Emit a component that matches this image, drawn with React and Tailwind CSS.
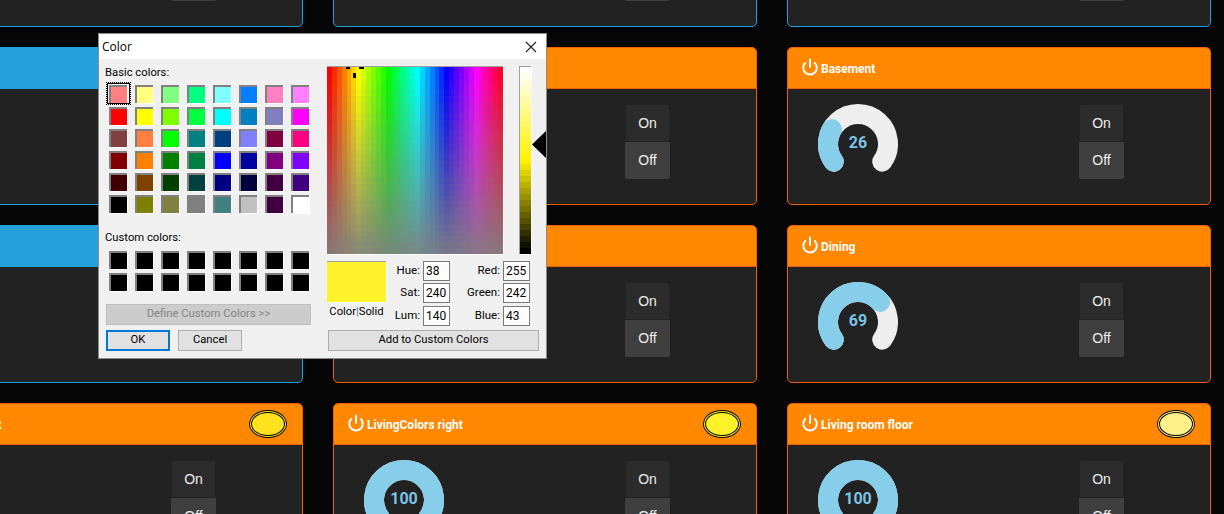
import React from "react";
import { Power } from "lucide-react";

const BASIC = [
  "#ff8080","#ffff80","#80ff80","#00ff80","#80ffff","#0080ff","#ff80c0","#ff80ff",
  "#ff0000","#ffff00","#80ff00","#00ff40","#00ffff","#0080c0","#8080c0","#ff00ff",
  "#804040","#ff8040","#00ff00","#008080","#004080","#8080ff","#800040","#ff0080",
  "#800000","#ff8000","#008000","#008040","#0000ff","#0000a0","#800080","#8000ff",
  "#400000","#804000","#004000","#004040","#000080","#000040","#400040","#400080",
  "#000000","#808000","#808040","#808080","#408080","#c0c0c0","#400040","#ffffff",
];

function polar(a) {
  const r = (a * Math.PI) / 180;
  return [40 + 30 * Math.cos(r), 40 + 30 * Math.sin(r)];
}
function arc(from, sweep) {
  const [x1, y1] = polar(from);
  const [x2, y2] = polar(from + sweep);
  return `M${x1} ${y1}A30 30 0 ${sweep > 180 ? 1 : 0} 1 ${x2} ${y2}`;
}

function Gauge({ value }) {
  return (
    <div className="relative w-20 h-[70px] shrink-0">
      <svg width="80" height="80" viewBox="0 0 80 80" className="block">
        <path d={arc(144, 252)} fill="none" stroke="#eeeeee" strokeWidth="20" strokeLinecap="round" />
        <path d={arc(144, (252 * value) / 100)} fill="none" stroke="#87ceeb" strokeWidth="20" strokeLinecap="round" />
      </svg>
      <div className="absolute left-0 top-[28px] w-20 text-center text-[16px] leading-[22px] font-bold text-[#7cc4e6] font-['Roboto',sans-serif]">
        {value}
      </div>
    </div>
  );
}

function Card({ blue, name, value, led }) {
  const border = blue ? "border-[#1f9fe0]" : "border-[#f55d05]";
  const head = blue ? "bg-[#26a0da]" : "bg-[#ff8800]";
  return (
    <div className={`h-[158px] rounded-[5px] border ${border} bg-[#222222] overflow-hidden flex flex-col`}>
      <div className={`h-[41px] shrink-0 border-b ${border} ${head} flex items-center pl-[13px] pr-[15px] text-white`}>
        {name && <Power size={18} strokeWidth={2.7} className="shrink-0 -mt-[3px]" />}
        <span className="ml-[2px] mt-[2px] text-[12px] font-bold font-['Roboto',sans-serif]">{name}</span>
        {led && (
          <div
            className="ml-auto w-[38px] h-[28px] rounded-[50%] border-[3px] border-double border-black"
            style={{ backgroundColor: led }}
          />
        )}
      </div>
      <div className="flex pl-[30px] pt-[15px]">
        <Gauge value={value} />
        <div className="ml-[181px] mt-[1px] w-[45px] flex flex-col items-center font-['Liberation_Sans',sans-serif] text-[14px] text-[#eeeeee]">
          <div className="w-[43px] h-[36px] bg-[#2c2c2c] rounded-t-[2px] flex items-center justify-center">On</div>
          <div className="w-[45px] h-[37px] mt-[1px] bg-[#3f3f3f] rounded-b-[2px] flex items-center justify-center">Off</div>
        </div>
      </div>
    </div>
  );
}

function Swatch({ color, selected }) {
  return (
    <div className="relative w-[18px] h-[18px]">
      <div
        className="w-full h-full border-2 border-[#808080] border-r-0 border-b-0 shadow-[1px_1px_0_#ffffff]"
        style={{ backgroundColor: color }}
      />
      {selected && (
        <div className="absolute -left-[3px] -top-[3px] w-[25px] h-[23px] border border-dotted border-black">
          <div className="w-full h-full border border-black" />
        </div>
      )}
    </div>
  );
}

function Spectrum() {
  const cols = 36;
  const rows = 32;
  const cells = [];
  for (let y = 0; y < rows; y++) {
    for (let x = 0; x < cols; x++) {
      const hue = (x / cols) * 360;
      const sat = 100 - (y / (rows - 1)) * 92;
      cells.push(
        <rect key={`${x}-${y}`} x={x * 5} y={y * 6} width="5.2" height="6.2" fill={`hsl(${hue} ${sat}% 50%)`} />
      );
    }
  }
  return (
    <div className="w-[176px] h-[188px] border-t border-[#a0a0a0] shadow-[1px_1px_0_#ffffff]">
      <svg width="176" height="187" viewBox="0 0 180 192" preserveAspectRatio="none" shapeRendering="crispEdges" className="block">
        {cells}
        <rect x="19" y="0" width="5" height="2" fill="#000" />
        <rect x="33" y="0" width="5" height="2" fill="#000" />
        <rect x="27" y="6" width="3" height="5" fill="#000" />
      </svg>
    </div>
  );
}

function LumBar() {
  const rows = 31;
  const cells = [];
  for (let y = 0; y < rows; y++) {
    const l = 100 - (y / (rows - 1)) * 100;
    cells.push(<rect key={y} x="0" y={y * 6} width="12" height="6.2" fill={`hsl(57 100% ${l}%)`} />);
  }
  return (
    <div className="w-[12px] h-[188px] border-t border-l border-[#a0a0a0] shadow-[1px_1px_0_#ffffff]">
      <svg width="11" height="187" viewBox="0 0 12 186" preserveAspectRatio="none" shapeRendering="crispEdges" className="block">
        {cells}
      </svg>
    </div>
  );
}

function Field({ label, value, labelW }) {
  return (
    <div className="flex items-center h-[20px]">
      <span className="text-right text-[11.5px]" style={{ width: labelW }}>{label}</span>
      <div className="ml-[3px] w-[27px] h-[20px] border border-[#7a7a7a] bg-white pl-[2px] leading-[18px] text-[12px]">{value}</div>
    </div>
  );
}

const Btn = "flex items-center justify-center h-[21px] bg-[#e1e1e1] text-black";

function Dialog() {
  return (
    <div className="absolute left-[98px] top-[33px] w-[449px] h-[326px] bg-[#f0f0f0] border border-[#8a8a8a] font-['Roboto',sans-serif] text-[11.25px] text-black">
      <div className="h-[25px] bg-white flex items-center pl-[3px] justify-between pr-[9px]">
        <span className="text-[12px] font-['Open_Sans',sans-serif]">Color</span>
        <svg width="12" height="12" viewBox="0 0 12 12"><path d="M1 1l10 10M11 1L1 11" stroke="#222" strokeWidth="1.1" fill="none" /></svg>
      </div>
      <div className="flex">
        <div className="w-[228px] pl-[6px] pt-[7px]">
          <div className="h-[14px] leading-[14px]">Basic colors:</div>
          <div className="ml-[4px] mt-[5px] grid grid-cols-[repeat(8,18px)] gap-x-[8px] gap-y-[4px]">
            {BASIC.map((c, i) => <Swatch key={i} color={c} selected={i === 0} />)}
          </div>
          <div className="mt-[18px] h-[14px] leading-[14px]">Custom colors:</div>
          <div className="ml-[4px] mt-[6px] grid grid-cols-[repeat(8,18px)] gap-x-[8px] gap-y-[4px]">
            {Array.from({ length: 16 }).map((_, i) => <Swatch key={i} color="#000000" />)}
          </div>
          <div className="ml-[1px] mt-[13px] w-[205px] h-[21px] flex items-center justify-center bg-[#cccccc] border border-[#bfbfbf] text-[#838383]">
            Define Custom Colors &gt;&gt;
          </div>
          <div className="ml-[1px] mt-[5px] flex gap-[8px]">
            <div className={`${Btn} w-[64px] border-2 border-[#0078d7]`}>OK</div>
            <div className={`${Btn} w-[64px] border border-[#adadad]`}>Cancel</div>
          </div>
        </div>
        <div className="pt-[7px]">
          <div className="flex">
            <Spectrum />
            <div className="ml-[16px]"><LumBar /></div>
            <svg width="14" height="27" viewBox="0 0 14 27" className="ml-[1px] mt-[65px]"><path d="M14 0V27L0 13.5Z" fill="#000" /></svg>
          </div>
          <div className="flex mt-[7px]">
            <div className="w-[59px]">
              <div className="h-[41px] bg-[#fff22b] border-t border-[#a0a0a0] shadow-[1px_1px_0_#ffffff]" />
              <div className="mt-[2px] text-center whitespace-nowrap">Color<span className="text-[#3b7fc4]">|</span>Solid</div>
            </div>
            <div className="ml-[2px] w-[62px] flex flex-col gap-[2px]">
              <Field label="Hue:" value="38" labelW={32} />
              <Field label="Sat:" value="240" labelW={32} />
              <div className="mt-[1px]"><Field label="Lum:" value="140" labelW={32} /></div>
            </div>
            <div className="flex flex-col gap-[2px]">
              <Field label="Red:" value="255" labelW={50} />
              <Field label="Green:" value="242" labelW={50} />
              <div className="mt-[1px]"><Field label="Blue:" value="43" labelW={50} /></div>
            </div>
          </div>
          <div className={`${Btn} ml-[1px] mt-[4px] w-[211px] border border-[#adadad]`}>Add to Custom Colors</div>
        </div>
      </div>
    </div>
  );
}

export default function App() {
  return (
    <div className="relative w-[1224px] h-[514px] overflow-hidden bg-[#050505]">
      <div className="-ml-[121px] -mt-[131px] w-[1332px] grid grid-cols-[repeat(3,424px)] gap-x-[30px] gap-y-[20px]">
        <Card blue value={50} />
        <Card blue value={50} />
        <Card blue value={50} />
        <Card blue value={50} />
        <Card value={50} />
        <Card name="Basement" value={26} />
        <Card blue value={50} />
        <Card value={50} />
        <Card name="Dining" value={69} />
        <Card name="LivingColors left" value={100} led="#ffe21f" />
        <Card name="LivingColors right" value={100} led="#fff22b" />
        <Card name="Living room floor" value={100} led="#fff08a" />
      </div>
      <Dialog />
    </div>
  );
}
